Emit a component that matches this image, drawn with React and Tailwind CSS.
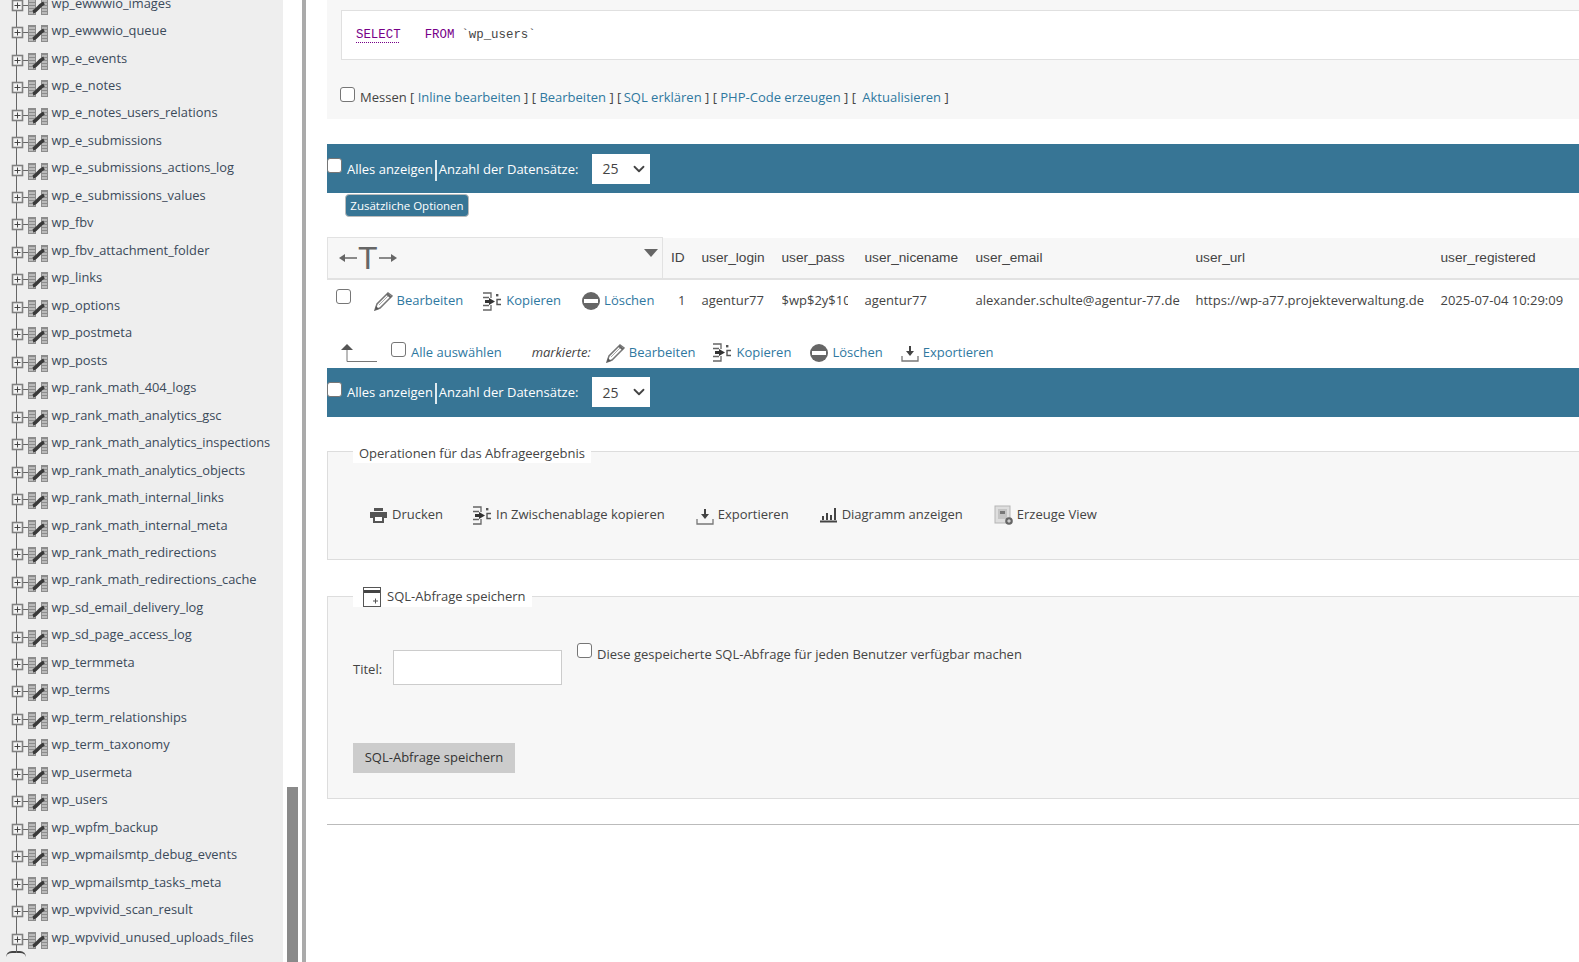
import { ChevronDown } from 'lucide-react'

const TABLES = [
  'wp_ewwwio_images', 'wp_ewwwio_queue', 'wp_e_events', 'wp_e_notes', 'wp_e_notes_users_relations',
  'wp_e_submissions', 'wp_e_submissions_actions_log', 'wp_e_submissions_values', 'wp_fbv',
  'wp_fbv_attachment_folder', 'wp_links', 'wp_options', 'wp_postmeta', 'wp_posts', 'wp_rank_math_404_logs',
  'wp_rank_math_analytics_gsc', 'wp_rank_math_analytics_inspections', 'wp_rank_math_analytics_objects',
  'wp_rank_math_internal_links', 'wp_rank_math_internal_meta', 'wp_rank_math_redirections',
  'wp_rank_math_redirections_cache', 'wp_sd_email_delivery_log', 'wp_sd_page_access_log', 'wp_termmeta',
  'wp_terms', 'wp_term_relationships', 'wp_term_taxonomy', 'wp_usermeta', 'wp_users', 'wp_wpfm_backup',
  'wp_wpmailsmtp_debug_events', 'wp_wpmailsmtp_tasks_meta', 'wp_wpvivid_scan_result',
  'wp_wpvivid_unused_uploads_files',
]

function TreeIcon() {
  return (
    <svg width="48" height="28" viewBox="0 0 48 28" className="shrink-0 overflow-visible">
      <path d="M16.5 -1V29M22 15.5H28" stroke="#666" fill="none" />
      <rect x="12.5" y="10.5" width="10" height="10" fill="#f4f4f4" stroke="#808080" strokeWidth="1.6" />
      <path d="M14.5 15.5H20.5M17.5 12.5V18.5" stroke="#444" fill="none" />
      <g fill="#8c8c8c">
        <rect x="28" y="8" width="8" height="17" />
        <rect x="41" y="8" width="7" height="17" />
      </g>
      <path d="M29 11H35M29 14H35M29 17H35M29 20H35M29 23H35M42 11H47M42 14H47M42 17H47M42 20H47M42 23H47" stroke="#e8e8e8" fill="none" />
      <path d="M33 22C37 21 38 16 44 13" stroke="#3a3a3a" strokeWidth="3.6" fill="none" />
    </svg>
  )
}

function Checkbox({ className = '' }) {
  return (
    <input
      type="checkbox"
      className={`appearance-none w-[15px] h-[15px] shrink-0 bg-white border border-[#767676] rounded-[3px] ${className}`}
    />
  )
}

function PencilIcon() {
  return (
    <svg width="19" height="20" viewBox="0 0 19 20" className="shrink-0">
      <path d="M1 19L3 13L14 2L18 5L6 17Z" fill="#fff" stroke="#777" strokeWidth="1.5" />
      <path d="M1 19L2 15L5 18Z" fill="#555" />
      <path d="M13 3L17 6.5" stroke="#666" strokeWidth="2.2" />
      <path d="M5 14L14 5" stroke="#aaa" />
    </svg>
  )
}

function CopyIcon() {
  return (
    <svg width="19" height="19" viewBox="0 0 19 19" className="shrink-0">
      <path d="M0 1H8V6M0 5.5H6M0 13.5H6M8 13V18H0" stroke="#666" strokeWidth="1.3" fill="none" />
      <path d="M2 8H6V6L12 9.5L6 13V11H2Z" fill="#333" />
      <rect x="13" y="2" width="2.4" height="2.4" fill="#555" />
      <path d="M18 7.5H14V12.5H18" stroke="#555" strokeWidth="1.4" fill="none" />
    </svg>
  )
}

function DeleteIcon() {
  return (
    <svg width="18" height="18" viewBox="0 0 18 18" className="shrink-0">
      <circle cx="9" cy="9" r="9" fill="#666" />
      <rect x="2" y="7" width="14" height="4" fill="#fff" />
    </svg>
  )
}

function ExportIcon() {
  return (
    <svg width="18" height="19" viewBox="0 0 18 19" className="shrink-0">
      <path d="M1 13V18H17V13" stroke="#777" strokeWidth="1.3" fill="none" />
      <path d="M8 3H10V8H13L9 13L5 8H8Z" fill="#444" />
    </svg>
  )
}

function PrintIcon() {
  return (
    <svg width="19" height="16" viewBox="0 0 19 16" className="shrink-0">
      <path d="M5 1H14V4H5Z" fill="#555" />
      <path d="M1 5H18V11H15V8H4V11H1Z" fill="#555" />
      <path d="M5 9H14V15H5Z" fill="#fff" stroke="#555" strokeWidth="2" />
    </svg>
  )
}

function ChartIcon() {
  return (
    <svg width="19" height="18" viewBox="0 0 19 18" className="shrink-0">
      <path d="M3 10H5V14H3ZM7 7H9V14H7ZM11 9H13V14H11ZM15 2H17V14H15Z" fill="#444" />
      <path d="M1 15.5H18" stroke="#444" strokeWidth="2" />
    </svg>
  )
}

function ViewIcon() {
  return (
    <svg width="19" height="20" viewBox="0 0 19 20" className="shrink-0">
      <rect x="1" y="1" width="15" height="17" fill="#dedede" stroke="#b5b5b5" />
      <rect x="4" y="4" width="9" height="10" fill="#c4c4c4" />
      <rect x="6" y="6" width="5" height="3" fill="#777" />
      <circle cx="15" cy="16" r="3.8" fill="#666" />
      <path d="M13.2 16H16.8M15 14.2V17.8" stroke="#eee" />
    </svg>
  )
}

function BookmarkIcon() {
  return (
    <svg width="18" height="20" viewBox="0 0 18 20" className="shrink-0">
      <rect x="0.5" y="0.5" width="17" height="19" fill="#fff" stroke="#555" />
      <rect x="1" y="3" width="16" height="3" fill="#444" />
      <path d="M10 14H15M12.5 11.5V16.5" stroke="#555" />
    </svg>
  )
}

function ActionLink({ icon, label, className = '' }) {
  return (
    <a className={`flex items-center text-[#2f789f] ${className}`}>
      {icon}
      <span className="ml-[4px]">{label}</span>
    </a>
  )
}

function ResultBar() {
  return (
    <div className="flex items-center h-[49px] bg-[#377595] text-white">
      <Checkbox className="self-start mt-[14px]" />
      <span className="ml-[5px] mt-[2px]">Alles anzeigen</span>
      <span className="w-[2px] h-[21px] bg-[#dfeaf0] mx-[2px] mt-[3px]" />
      <span className="mt-[2px]">Anzahl der Datensätze:</span>
      <div className="relative ml-[14px] w-[58px] h-[30px] bg-white">
        <select className="appearance-none w-full h-full pl-[10px] text-[14px] text-[#444] outline-none">
          <option>25</option>
        </select>
        <ChevronDown size={18} strokeWidth={2.4} className="absolute right-[2px] top-[6px] text-[#444] pointer-events-none" />
      </div>
    </div>
  )
}

function Th({ children, className = '' }) {
  return <th className={`font-normal text-left align-middle px-[8px] pt-[2px] font-['Liberation_Sans',sans-serif] text-[13.7px] bg-[#f7f7f7] border-b-2 border-[#e2e2e2] ${className}`}>{children}</th>
}

export default function App() {
  return (
    <div className="flex w-[1579px] h-[962px] overflow-hidden bg-white text-[#444] text-[13px] font-['Open_Sans',sans-serif]">
      {/* Navigation tree */}
      <aside className="w-[283px] shrink-0 bg-[#eee] overflow-hidden">
        <ul className="-mt-[10px] text-[12.85px]">
          {TABLES.map((name) => (
            <li key={name} className="flex h-[27.48px] items-center">
              <TreeIcon />
              <span className="ml-[3.5px] -mt-[1px] text-[#3b4a5a] whitespace-nowrap">{name}</span>
            </li>
          ))}
          <li className="h-[27px] pl-[6px]">
            <div className="w-[20px] h-[6px] rounded-t-full border-t-2 border-[#444]" />
          </li>
        </ul>
      </aside>

      {/* Scrollbar and splitter */}
      <div className="w-[19px] shrink-0 flex flex-col justify-end pl-[4px]">
        <div className="w-[11px] h-[175px] bg-[#8a8a8a]" />
      </div>
      <div className="w-[4px] shrink-0 bg-[#aaa]" />

      <main className="flex-1 min-w-0 pl-[21px] overflow-hidden">
        <div className="w-[1252px]">
          {/* Query box */}
          <section className="h-[119px] bg-[#f7f7f7] pl-[14px] pt-[10px]">
            <div className="h-[50px] pt-[1px] bg-white border border-r-0 border-[#e0e0e0] pl-[14px] flex items-center font-['Liberation_Mono',monospace] text-[12.4px]">
              <span className="text-[#708] underline decoration-dotted underline-offset-[4px]">SELECT</span>
              <span className="text-[#708] ml-[24px]">FROM</span>
              <span className="text-[#444] ml-[7px]">`wp_users`</span>
            </div>
            <div className="flex items-center mt-[28px] whitespace-pre">
              <Checkbox className="-ml-[1px] -mt-[7px]" />
              <span className="ml-[5px]">Messen [ </span>
              <a className="text-[#2f789f]">Inline bearbeiten</a>
              <span> ] [ </span>
              <a className="text-[#2f789f]">Bearbeiten</a>
              <span> ] [ </span>
              <a className="text-[#2f789f] -ml-[1px]">SQL erklären</a>
              <span> ] [ </span>
              <a className="text-[#2f789f]">PHP-Code erzeugen</a>
              <span> ] [ </span>
              <a className="text-[#2f789f] ml-[3px]">Aktualisieren</a>
              <span> ]</span>
            </div>
          </section>

          <div className="mt-[25px]">
            <ResultBar />
          </div>
          <button className="block ml-[18px] mt-[1px] w-[124px] h-[23px] rounded-[4px] border border-[#bbb] bg-[#377595] text-white text-[11.5px]">
            Zusätzliche Optionen
          </button>

          {/* Result table */}
          <table className="mt-[20px] table-fixed border-collapse w-[1252px] whitespace-nowrap">
            <colgroup>
              <col className="w-[335px]" />
              <col className="w-[31px]" />
              <col className="w-[80px]" />
              <col className="w-[83px]" />
              <col className="w-[111px]" />
              <col className="w-[220px]" />
              <col className="w-[245px]" />
              <col />
            </colgroup>
            <thead>
              <tr className="h-[41px]">
                <th className="relative font-normal bg-[#f7f7f7] border-t border-x border-b-2 border-[#e2e2e2] p-0">
                  <div className="flex items-center pl-[11px] h-full">
                    <svg width="18" height="10" viewBox="0 0 18 10" className="shrink-0">
                      <path d="M5 5H18" stroke="#666" strokeWidth="1.5" />
                      <path d="M0 5L6 1V9Z" fill="#666" />
                    </svg>
                    <span className="font-['Liberation_Sans',sans-serif] text-[32px] leading-none text-[#666] mx-[1px]">T</span>
                    <svg width="18" height="10" viewBox="0 0 18 10" className="shrink-0">
                      <path d="M0 5H13" stroke="#666" strokeWidth="1.5" />
                      <path d="M18 5L12 1V9Z" fill="#666" />
                    </svg>
                  </div>
                  <svg width="14" height="8" viewBox="0 0 14 8" className="absolute right-[4px] top-[11px]">
                    <path d="M0 0H14L7 8Z" fill="#666" />
                  </svg>
                </th>
                <Th>ID</Th>
                <Th>user_login</Th>
                <Th>user_pass</Th>
                <Th>user_nicename</Th>
                <Th>user_email</Th>
                <Th>user_url</Th>
                <Th>user_registered</Th>
              </tr>
            </thead>
            <tbody>
              <tr className="h-[44px]">
                <td className="p-0 pl-[8px]">
                  <div className="flex items-center">
                    <Checkbox className="-mt-[9px]" />
                    <ActionLink icon={<PencilIcon />} label="Bearbeiten" className="ml-[23px]" />
                    <ActionLink icon={<CopyIcon />} label="Kopieren" className="ml-[20px]" />
                    <ActionLink icon={<DeleteIcon />} label="Löschen" className="ml-[21px]" />
                  </div>
                </td>
                <td className="px-[8px] text-right">1</td>
                <td className="px-[8px]">agentur77</td>
                <td className="px-[8px]"><div className="overflow-hidden w-[66px]">$wp$2y$10</div></td>
                <td className="px-[8px]">agentur77</td>
                <td className="px-[8px]">alexander.schulte@agentur-77.de</td>
                <td className="px-[8px]">https://wp-a77.projekteverwaltung.de</td>
                <td className="px-[8px]">2025-07-04 10:29:09</td>
              </tr>
            </tbody>
          </table>

          {/* Bulk actions */}
          <div className="flex items-center h-[45px] pt-[15px] pl-[14px]">
            <svg width="36" height="19" viewBox="0 0 36 19" className="shrink-0">
              <path d="M6 4V18.5H36" stroke="#777" fill="none" />
              <path d="M0 7L6 1L12 7Z" fill="#555" />
            </svg>
            <Checkbox className="ml-[14px] -mt-[7px]" />
            <span className="ml-[5px] text-[#2f789f]">Alle auswählen</span>
            <em className="ml-[30px]">markierte:</em>
            <ActionLink icon={<PencilIcon />} label="Bearbeiten" className="ml-[15px]" />
            <ActionLink icon={<CopyIcon />} label="Kopieren" className="ml-[18px]" />
            <ActionLink icon={<DeleteIcon />} label="Löschen" className="ml-[19px]" />
            <ActionLink icon={<ExportIcon />} label="Exportieren" className="ml-[18px]" />
          </div>

          <ResultBar />

          {/* Query result operations */}
          <fieldset className="mt-[23px] h-[120px] bg-[#f7f7f7] border border-r-0 border-[#ddd] pl-[41px]">
            <legend className="-ml-[16px] px-[6px] pt-[4px] bg-white">Operationen für das Abfrageergebnis</legend>
            <div className="flex items-center mt-[42px] text-[#444]">
              <ActionLink icon={<PrintIcon />} label="Drucken" className="!text-[#444]" />
              <ActionLink icon={<CopyIcon />} label="In Zwischenablage kopieren" className="!text-[#444] ml-[30px]" />
              <ActionLink icon={<ExportIcon />} label="Exportieren" className="!text-[#444] ml-[31px]" />
              <ActionLink icon={<ChartIcon />} label="Diagramm anzeigen" className="!text-[#444] ml-[30px]" />
              <ActionLink icon={<ViewIcon />} label="Erzeuge View" className="!text-[#444] ml-[31px]" />
            </div>
          </fieldset>

          {/* Save query */}
          <fieldset className="mt-[27px] h-[212px] bg-[#f7f7f7] border border-r-0 border-[#ddd] pl-[25px]">
            <legend className="px-[10px] pr-[6px] bg-white flex items-center gap-[6px]">
              <BookmarkIcon />
              SQL-Abfrage speichern
            </legend>
            <div className="flex items-start mt-[43px]">
              <span className="mt-[10px]">Titel:</span>
              <input className="ml-[11px] w-[169px] h-[35px] bg-white border border-[#ccc]" />
              <div className="flex items-center ml-[15px] -mt-[5px]">
                <Checkbox className="-mt-[7px]" />
                <span className="ml-[5px]">Diese gespeicherte SQL-Abfrage für jeden Benutzer verfügbar machen</span>
              </div>
            </div>
            <button className="block mt-[58px] w-[162px] h-[30px] bg-[#ccc] text-[#333] text-center">
              SQL-Abfrage speichern
            </button>
          </fieldset>

          <hr className="mt-[25px] border-0 border-t border-[#bbb]" />
        </div>
      </main>
    </div>
  )
}
